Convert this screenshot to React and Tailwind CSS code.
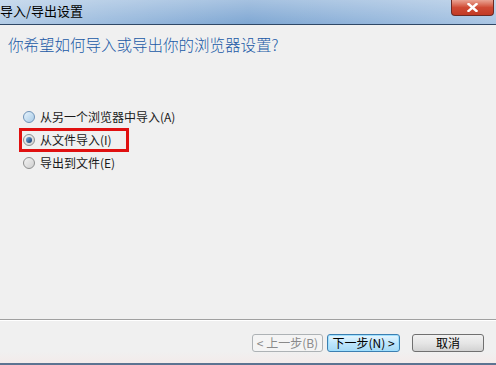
const FONT = { fontFamily: '"Noto Sans CJK SC", "Noto Sans", sans-serif' }

function Radio({ checked, tint }) {
  return (
    <span
      className={`relative inline-block h-[12px] w-[12px] shrink-0 rounded-full border ${
        tint ? 'border-[#6f93b8] bg-gradient-to-br from-[#e6f3fc] to-[#a9cbe6]' : 'border-[#8e8f8f] bg-gradient-to-br from-[#f4f4f4] to-[#cfcfcf]'
      }`}
    >
      {checked && (
        <span className="absolute left-[2px] top-[2px] h-[6px] w-[6px] rounded-full bg-gradient-to-br from-[#7fb4e6] to-[#10366a]" />
      )}
    </span>
  )
}

const options = [
  { label: '从另一个浏览器中导入(A)', tint: true },
  { label: '从文件导入(I)', checked: true, boxed: true },
  { label: '导出到文件(E)' },
]

export default function App() {
  return (
    <div className="flex h-[365px] w-[496px] flex-col overflow-hidden bg-[#f0f0f0]" style={FONT}>
      <div className="relative h-[25px] shrink-0 border-b border-[#2f4866] bg-gradient-to-r from-[#b3cce6] via-[#7fa7d3] to-[#a9c5e3]">
        <div className="absolute inset-0 bg-gradient-to-b from-white/30 to-transparent" />
        <div className="relative pt-[3px] text-[13px] leading-[16px] text-black">导入/导出设置</div>
        <div className="absolute right-[2px] top-0 flex h-[16px] w-[43px] items-center justify-center rounded-b-[4px] border border-t-0 border-[#6b2a24] bg-gradient-to-b from-[#e9a393] via-[#cf4a34] to-[#c23a25]">
          <svg width="11" height="9" viewBox="0 0 11 9">
            <path d="M1.5 1 L9.5 8 M9.5 1 L1.5 8" stroke="#fff" strokeWidth="2.4" strokeLinecap="square" />
          </svg>
        </div>
      </div>

      <div className="pl-[8px] pt-[8px] text-[15.5px] font-light leading-[22px] text-[#2159a6]">你希望如何导入或导出你的浏览器设置?</div>

      <div className="mt-[51px] flex flex-col">
        {options.map((o) => (
          <div
            key={o.label}
            className={`flex h-[22px] items-center gap-[5px] text-[12px] text-[#1a1a1a] ${
              o.boxed ? 'ml-[19px] h-[24px] w-[110px] border-[3px] border-[#e01010] pl-[1px]' : 'pl-[23px]'
            }`}
          >
            <Radio checked={o.checked} tint={o.tint} />
            <span>{o.label}</span>
          </div>
        ))}
      </div>

      <div className="flex-1" />

      <div className="border-t border-[#a0a0a0]" />
      <div className="border-t border-white" />

      <div className="flex pl-[252px] pt-[13px] text-[12px] leading-[16px]">
        <button className="flex h-[18px] w-[71px] items-center justify-center rounded-[3px] border border-[#adb2b5] bg-[#f4f4f4] text-[#8a8a8a]">
          &lt; 上一步(B)
        </button>
        <button className="ml-[4px] flex h-[18px] w-[73px] items-center justify-center rounded-[3px] border border-[#3c7fb1] bg-gradient-to-b from-[#e8f6fd] via-[#bee6fd] to-[#a7d9f5] text-black shadow-[inset_0_0_0_1px_#9fe0ff]">
          下一步(N) &gt;
        </button>
        <button className="ml-[12px] flex h-[18px] w-[72px] items-center justify-center rounded-[3px] border border-[#707070] bg-gradient-to-b from-[#f2f2f2] via-[#e6e6e6] to-[#d2d2d2] text-black">
          取消
        </button>
      </div>

      <div className="h-[11px] bg-gradient-to-b from-[#f0f0f0] to-[#f3ebea]" />
      <div className="h-[2px] bg-[#5c7492]" />
    </div>
  )
}
